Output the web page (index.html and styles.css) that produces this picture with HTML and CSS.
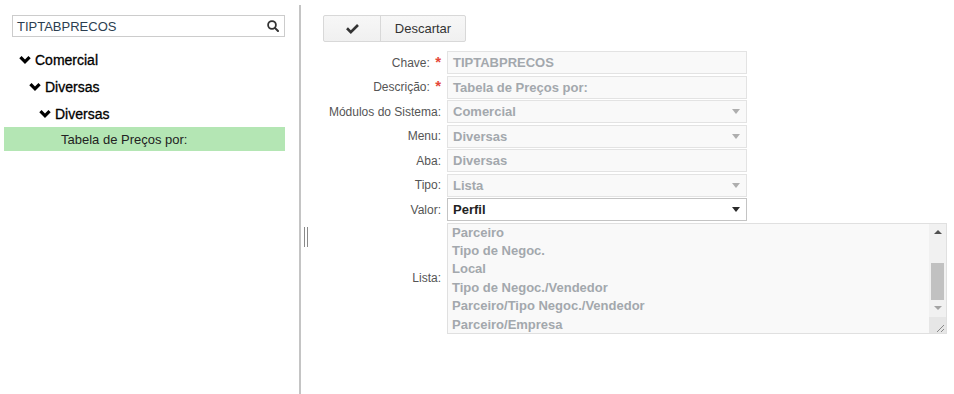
FILE: index.html
```html
<!DOCTYPE html>
<html lang="pt">
<head>
<meta charset="utf-8">
<title>Parâmetros</title>
<link rel="stylesheet" href="styles.css">
</head>
<body>
<div class="app">
  <aside class="sidebar">
    <div class="search">
      <span class="search-text">TIPTABPRECOS</span>
      <svg class="search-icon" width="12" height="12" viewBox="0 0 12 12"><circle cx="5" cy="5" r="3.9" fill="none" stroke="#333" stroke-width="1.8"/><line x1="7.9" y1="7.9" x2="11" y2="11" stroke="#333" stroke-width="2" stroke-linecap="round"/></svg>
    </div>
    <ul class="tree">
      <li class="node lvl0"><svg class="chev" width="12" height="8" viewBox="0 0 12 8.4"><polygon points="0,2.4 2.4,0 6,3.6 9.6,0 12,2.4 6,8.4" fill="#000"/></svg><span>Comercial</span></li>
      <li class="node lvl1"><svg class="chev" width="12" height="8" viewBox="0 0 12 8.4"><polygon points="0,2.4 2.4,0 6,3.6 9.6,0 12,2.4 6,8.4" fill="#000"/></svg><span>Diversas</span></li>
      <li class="node lvl2"><svg class="chev" width="12" height="8" viewBox="0 0 12 8.4"><polygon points="0,2.4 2.4,0 6,3.6 9.6,0 12,2.4 6,8.4" fill="#000"/></svg><span>Diversas</span></li>
      <li class="leaf selected">Tabela de Preços por:</li>
    </ul>
  </aside>
  <div class="splitter"><span class="grip"></span></div>
  <main class="content">
    <div class="btn-group">
      <button class="btn btn-check" type="button"><svg width="13" height="10" viewBox="0 0 13 10.1"><polygon points="0,5.3 1.9,3.4 4.8,6.3 11.1,0 13,1.9 4.8,10.1" fill="#333"/></svg></button>
      <button class="btn btn-text" type="button">Descartar</button>
    </div>
    <div class="form">
      <label class="lbl">Chave: <span class="req">*</span></label>
      <div class="field">TIPTABPRECOS</div>

      <label class="lbl">Descrição: <span class="req">*</span></label>
      <div class="field">Tabela de Preços por:</div>

      <label class="lbl">Módulos do Sistema:</label>
      <div class="field"><span>Comercial</span><span class="caret"></span></div>

      <label class="lbl">Menu:</label>
      <div class="field"><span>Diversas</span><span class="caret"></span></div>

      <label class="lbl">Aba:</label>
      <div class="field">Diversas</div>

      <label class="lbl">Tipo:</label>
      <div class="field"><span>Lista</span><span class="caret"></span></div>

      <label class="lbl">Valor:</label>
      <div class="field active"><span>Perfil</span><span class="caret dark"></span></div>

      <label class="lbl">Lista:</label>
      <div class="listbox">
        <div class="list-items">
          <div>Parceiro</div>
          <div>Tipo de Negoc.</div>
          <div>Local</div>
          <div>Tipo de Negoc./Vendedor</div>
          <div>Parceiro/Tipo Negoc./Vendedor</div>
          <div>Parceiro/Empresa</div>
        </div>
        <div class="sb">
          <div class="sb-btn"><span class="arrow-up"></span></div>
          <div class="sb-track"><div class="sb-thumb"></div></div>
          <div class="sb-btn"><span class="arrow-down"></span></div>
          <svg class="sb-corner" width="17" height="16" viewBox="0 0 17 16"><line x1="15" y1="8" x2="8" y2="15" stroke="#888" stroke-width="1"/><line x1="15" y1="12" x2="12" y2="15" stroke="#888" stroke-width="1"/></svg>
        </div>
      </div>
    </div>
  </main>
</div>
</body>
</html>
```
FILE: styles.css
```css
* { box-sizing: border-box; }

body {
  margin: 0;
  background: #fff;
  font-family: "Liberation Sans", Arial, sans-serif;
}

.app {
  display: flex;
  height: 394px;
}

/* Sidebar */
.sidebar {
  width: 299px;
  padding: 15px 14px 0 4px;
}

.search {
  margin-left: 8px;
  height: 22px;
  border: 1px solid #cccccc;
  display: flex;
  align-items: center;
  justify-content: space-between;
  padding: 0 5px 0 4px;
}

.search-text {
  font-size: 13px;
  color: #2c3e50;
}

.tree {
  list-style: none;
  margin: 9px 0 0;
  padding: 0;
}

.node {
  height: 27px;
  display: flex;
  align-items: center;
  gap: 4px;
  font-size: 14px;
  color: #000;
  -webkit-text-stroke: 0.3px #000;
}

.chev { flex: none; }

.lvl0 { padding-left: 15px; }
.lvl1 { padding-left: 25px; }
.lvl2 { padding-left: 35px; }

.leaf {
  height: 24px;
  display: flex;
  align-items: center;
  padding-left: 57px;
  font-size: 13px;
  color: #222;
}

.selected { background: #b4e6b4; }

/* Splitter */
.splitter {
  width: 2px;
  margin-top: 5px;
  background: #c4c4c4;
  position: relative;
}

.grip {
  position: absolute;
  left: 5px;
  top: 222px;
  width: 4px;
  height: 20px;
  border-left: 1px solid #8a8a8a;
  border-right: 1px solid #8a8a8a;
}

/* Content */
.content {
  flex: 1;
  padding: 15px 0 0 22px;
}

.btn-group {
  display: flex;
  width: fit-content;
  height: 27px;
  border: 1px solid #d8d8d8;
  border-radius: 2px;
  background: linear-gradient(#f7f7f7, #f0f0f0);
}

.btn {
  border: 0;
  background: transparent;
  padding: 0;
  margin: 0;
  font-family: inherit;
  font-size: 13px;
  color: #333;
  display: flex;
  align-items: center;
  justify-content: center;
}

.btn-check {
  width: 57px;
  border-right: 1px solid #d8d8d8;
}

.btn-text { width: 84px; }

.form {
  display: grid;
  grid-template-columns: 118px auto;
  column-gap: 6px;
  row-gap: 1.5px;
  margin-top: 9px;
  align-items: center;
  justify-items: start;
}

.lbl {
  justify-self: end;
  font-size: 12px;
  color: #555;
  white-space: nowrap;
}

.req {
  color: #e5483a;
  font-weight: bold;
  font-size: 15px;
  line-height: 10px;
  margin-left: 2px;
}

.field {
  width: 300px;
  height: 23px;
  border: 1px solid #e3e3e3;
  background: #f9f9f9;
  padding: 0 5px;
  display: flex;
  align-items: center;
  justify-content: space-between;
  font-size: 13px;
  font-weight: bold;
  color: #a3a8ad;
  white-space: nowrap;
}

.field.active {
  background: #fff;
  border-color: #c4c4c4;
  color: #222;
}

.caret {
  width: 0;
  height: 0;
  border-left: 4px solid transparent;
  border-right: 4px solid transparent;
  border-top: 5px solid #aeaeae;
  margin-right: 1px;
}

.caret.dark { border-top-color: #2a2a2a; }

/* Listbox */
.listbox {
  width: 500px;
  height: 111px;
  border: 1px solid #e0e0e0;
  background: #f9f9f9;
  display: flex;
}

.list-items {
  flex: 1;
  overflow: hidden;
  padding: 0 4px;
  font-size: 13px;
  font-weight: bold;
  line-height: 18.4px;
  color: #a3a8ad;
  white-space: nowrap;
}

.sb {
  width: 17px;
  background: #f1f1f1;
  display: flex;
  flex-direction: column;
}

.sb-btn {
  height: 17px;
  display: flex;
  align-items: center;
  justify-content: center;
}

.arrow-up {
  width: 0;
  height: 0;
  border-left: 4px solid transparent;
  border-right: 4px solid transparent;
  border-bottom: 4px solid #505050;
}

.arrow-down {
  width: 0;
  height: 0;
  border-left: 4px solid transparent;
  border-right: 4px solid transparent;
  border-top: 4px solid #a3a3a3;
}

.sb-track {
  height: 59px;
  display: flex;
  flex-direction: column;
  justify-content: flex-end;
  align-items: center;
}

.sb-thumb {
  width: 13px;
  height: 37px;
  background: #c1c1c1;
}

.sb-corner {
  display: block;
  background: #e6e6e6;
}
```
